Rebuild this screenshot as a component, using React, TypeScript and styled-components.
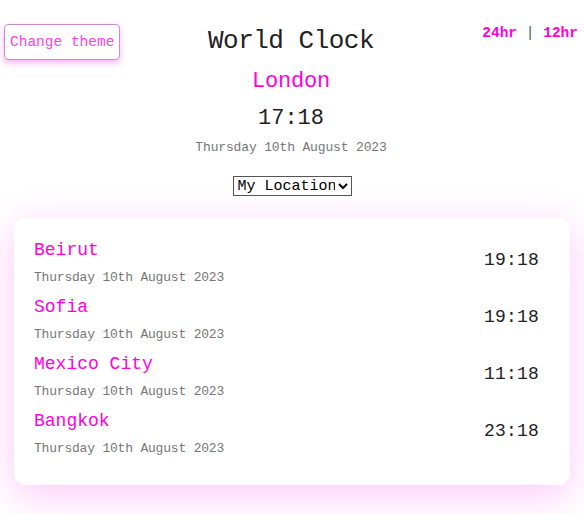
import React from "react";
import styled, { createGlobalStyle } from "styled-components";

const Global = createGlobalStyle`
  html, body { margin: 0; padding: 0; background: #ffffff; }
  body { font-family: "Liberation Mono", "DejaVu Sans Mono", monospace; color: #222; }
`;

const Page = styled.div`
  display: flex;
  flex-direction: column;
  padding: 24px 0 0;
  min-height: 514px;
  box-sizing: border-box;
`;

const Header = styled.header`
  display: grid;
  grid-template-columns: 1fr auto 1fr;
  align-items: start;
  padding: 0 6px 0 4px;
`;

const ThemeButton = styled.button`
  justify-self: start;
  font-family: inherit;
  font-size: 14.5px;
  height: 36px;
  padding: 0 5px;
  color: #ff40ee;
  background: #fff;
  border: 1px solid #c98ccc;
  border-radius: 4px;
  box-shadow: 0 3px 6px rgba(255, 0, 230, 0.3);
  cursor: pointer;
`;

const Center = styled.div`
  display: flex;
  flex-direction: column;
  align-items: center;
  padding-top: 1px;
`;

const Title = styled.h1`
  margin: 0;
  font-size: 26px;
  font-weight: 400;
  letter-spacing: -0.5px;
  line-height: 32px;
  color: #222;
`;

const City = styled.div`
  margin-top: 10px;
  font-size: 22px;
  letter-spacing: -0.2px;
  line-height: 30px;
  color: #ff00dd;
`;

const BigTime = styled.div`
  margin-top: 8px;
  font-size: 22px;
  line-height: 28px;
  color: #222;
`;

const DateText = styled.div<{ $mt?: number }>`
  margin-top: ${(p) => p.$mt ?? 0}px;
  font-size: 13px;
  letter-spacing: -0.15px;
  line-height: 18px;
  color: #777;
`;

const Toggle = styled.div`
  justify-self: end;
  display: flex;
  font-size: 14.5px;
  line-height: 18px;
  font-weight: 700;
  color: #ff00dd;
  white-space: pre;
`;

const Sep = styled.span`
  color: #555;
  font-weight: 400;
`;

const SelectWrap = styled.div`
  display: flex;
  justify-content: center;
  margin-top: 19px;
`;

const Select = styled.select`
  font-family: inherit;
  font-size: 15px;
  height: 20px;
  width: 119px;
  padding: 0;
  border: 1px solid #555;
  border-radius: 0;
  background: #fff;
  color: #000;
`;

const Card = styled.section`
  margin: 22px 14px 0;
  background: #fff;
  border-radius: 12px;
  padding: 20px 31px 27px 20px;
  display: flex;
  flex-direction: column;
  gap: 8px;
  box-shadow: 0 10px 40px rgba(255, 0, 230, 0.22);
`;

const Row = styled.div`
  display: flex;
  align-items: center;
  justify-content: space-between;
`;

const RowInfo = styled.div`
  display: flex;
  flex-direction: column;
  gap: 7px;
`;

const RowCity = styled.div`
  font-size: 18px;
  line-height: 24px;
  color: #ff00dd;
`;

const RowDate = styled.div`
  font-size: 13px;
  letter-spacing: -0.2px;
  line-height: 18px;
  color: #777;
`;

const RowTime = styled.div`
  font-size: 18px;
  letter-spacing: 0.2px;
  line-height: 24px;
  margin-bottom: 5px;
  color: #222;
`;

const cities = [
  { name: "Beirut", time: "19:18" },
  { name: "Sofia", time: "19:18" },
  { name: "Mexico City", time: "11:18" },
  { name: "Bangkok", time: "23:18" },
];

export default function App() {
  return (
    <>
      <Global />
      <Page>
        <Header>
          <ThemeButton>Change theme</ThemeButton>
          <Center>
            <Title>World Clock</Title>
            <City>London</City>
            <BigTime>17:18</BigTime>
            <DateText $mt={6}>Thursday 10th August 2023</DateText>
          </Center>
          <Toggle>
            <span>24hr</span>
            <Sep> | </Sep>
            <span>12hr</span>
          </Toggle>
        </Header>
        <SelectWrap>
          <Select defaultValue="my">
            <option value="my">My Location</option>
          </Select>
        </SelectWrap>
        <Card>
          {cities.map((c) => (
            <Row key={c.name}>
              <RowInfo>
                <RowCity>{c.name}</RowCity>
                <RowDate>Thursday 10th August 2023</RowDate>
              </RowInfo>
              <RowTime>{c.time}</RowTime>
            </Row>
          ))}
        </Card>
      </Page>
    </>
  );
}
